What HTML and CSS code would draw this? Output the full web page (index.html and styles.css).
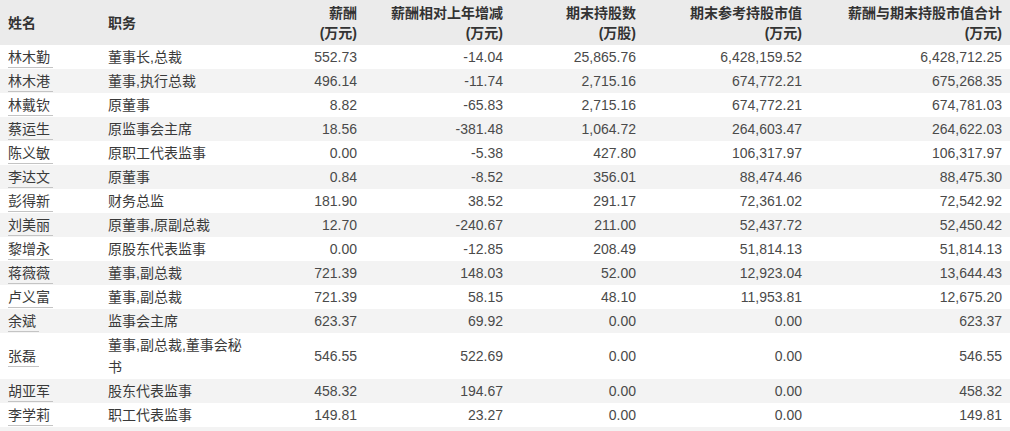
FILE: index.html
```html
<!DOCTYPE html>
<html lang="zh-CN">
<head>
<meta charset="utf-8">
<title>薪酬表</title>
<link rel="stylesheet" href="styles.css">
</head>
<body>
<table class="pay">
  <colgroup>
    <col class="c-name"><col class="c-role"><col class="c-pay"><col class="c-delta"><col class="c-shares"><col class="c-value"><col class="c-total">
  </colgroup>
  <thead>
    <tr>
      <th class="l">姓名</th>
      <th class="l">职务</th>
      <th>薪酬<br>(万元)</th>
      <th>薪酬相对上年增减<br>(万元)</th>
      <th>期末持股数<br>(万股)</th>
      <th>期末参考持股市值<br>(万元)</th>
      <th>薪酬与期末持股市值合计<br>(万元)</th>
    </tr>
  </thead>
  <tbody>
    <tr><td class="l"><span class="nm">林木勤</span></td><td class="l">董事长,总裁</td><td>552.73</td><td>-14.04</td><td>25,865.76</td><td>6,428,159.52</td><td>6,428,712.25</td></tr>
    <tr><td class="l"><span class="nm">林木港</span></td><td class="l">董事,执行总裁</td><td>496.14</td><td>-11.74</td><td>2,715.16</td><td>674,772.21</td><td>675,268.35</td></tr>
    <tr><td class="l"><span class="nm">林戴钦</span></td><td class="l">原董事</td><td>8.82</td><td>-65.83</td><td>2,715.16</td><td>674,772.21</td><td>674,781.03</td></tr>
    <tr><td class="l"><span class="nm">蔡运生</span></td><td class="l">原监事会主席</td><td>18.56</td><td>-381.48</td><td>1,064.72</td><td>264,603.47</td><td>264,622.03</td></tr>
    <tr><td class="l"><span class="nm">陈义敏</span></td><td class="l">原职工代表监事</td><td>0.00</td><td>-5.38</td><td>427.80</td><td>106,317.97</td><td>106,317.97</td></tr>
    <tr><td class="l"><span class="nm">李达文</span></td><td class="l">原董事</td><td>0.84</td><td>-8.52</td><td>356.01</td><td>88,474.46</td><td>88,475.30</td></tr>
    <tr><td class="l"><span class="nm">彭得新</span></td><td class="l">财务总监</td><td>181.90</td><td>38.52</td><td>291.17</td><td>72,361.02</td><td>72,542.92</td></tr>
    <tr><td class="l"><span class="nm">刘美丽</span></td><td class="l">原董事,原副总裁</td><td>12.70</td><td>-240.67</td><td>211.00</td><td>52,437.72</td><td>52,450.42</td></tr>
    <tr><td class="l"><span class="nm">黎增永</span></td><td class="l">原股东代表监事</td><td>0.00</td><td>-12.85</td><td>208.49</td><td>51,814.13</td><td>51,814.13</td></tr>
    <tr><td class="l"><span class="nm">蒋薇薇</span></td><td class="l">董事,副总裁</td><td>721.39</td><td>148.03</td><td>52.00</td><td>12,923.04</td><td>13,644.43</td></tr>
    <tr><td class="l"><span class="nm">卢义富</span></td><td class="l">董事,副总裁</td><td>721.39</td><td>58.15</td><td>48.10</td><td>11,953.81</td><td>12,675.20</td></tr>
    <tr><td class="l"><span class="nm">余斌</span></td><td class="l">监事会主席</td><td>623.37</td><td>69.92</td><td>0.00</td><td>0.00</td><td>623.37</td></tr>
    <tr><td class="l"><span class="nm">张磊</span></td><td class="l">董事,副总裁,董事会秘书</td><td>546.55</td><td>522.69</td><td>0.00</td><td>0.00</td><td>546.55</td></tr>
    <tr><td class="l"><span class="nm">胡亚军</span></td><td class="l">股东代表监事</td><td>458.32</td><td>194.67</td><td>0.00</td><td>0.00</td><td>458.32</td></tr>
    <tr><td class="l"><span class="nm">李学莉</span></td><td class="l">职工代表监事</td><td>149.81</td><td>23.27</td><td>0.00</td><td>0.00</td><td>149.81</td></tr>
    <tr class="tail"><td class="l"></td><td class="l"></td><td></td><td></td><td></td><td></td><td></td></tr>
  </tbody>
</table>
</body>
</html>
```

FILE: styles.css
```css
html, body {
  margin: 0;
  padding: 0;
  overflow: hidden;
  background: #ffffff;
}

body {
  font-family: "Liberation Sans", Arial, "Noto Sans CJK SC", sans-serif;
  font-size: 14px;
  color: #444;
}

.pay {
  width: 1010px;
  border-collapse: collapse;
  table-layout: fixed;
}

.c-name { width: 100px; }
.c-role { width: 158px; }
.c-pay { width: 107px; }
.c-delta { width: 146px; }
.c-shares { width: 133px; }
.c-value { width: 166px; }
.c-total { width: 200px; }

.pay th {
  background: #ebebeb;
  color: #333;
  font-weight: bold;
  text-align: right;
  line-height: 20px;
  padding: 3px 8px 2px 8px;
  height: 40px;
  vertical-align: middle;
}

.pay td {
  text-align: right;
  line-height: 22px;
  height: 22px;
  padding: 1px 8px;
  vertical-align: middle;
  color: #4a4a4a;
}

.pay th.l, .pay td.l {
  text-align: left;
}

.pay td.l {
  color: #3a3a3a;
}

.pay tbody tr:nth-child(even) td {
  background: #f3f3f3;
}

.nm {
  display: inline-block;
  vertical-align: top;
  line-height: 20px;
  padding: 1px 3px 0 0;
  border-bottom: 1px solid #c4c4c4;
}
```
